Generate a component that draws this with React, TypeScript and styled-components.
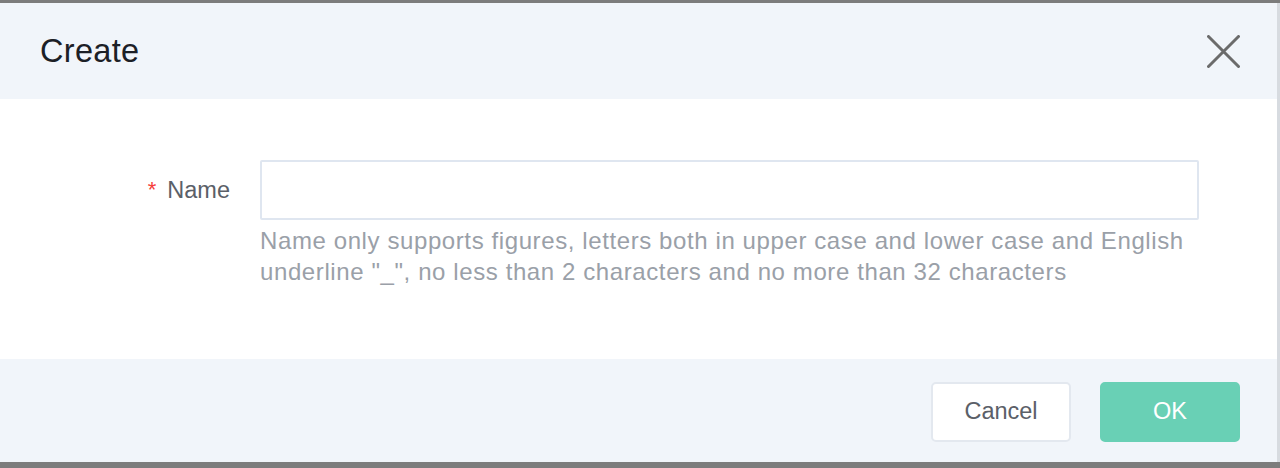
import React from "react";
import styled, { createGlobalStyle } from "styled-components";

const Global = createGlobalStyle`
  html, body { margin: 0; padding: 0; }
  body {
    background: #7c7c7c;
    font-family: "Liberation Sans", Arial, sans-serif;
    width: 1280px;
    height: 468px;
    overflow: hidden;
  }
`;

const Dialog = styled.div`
  margin-top: 3px;
  width: 1277px;
  height: 459px;
  border-right: 3px solid #d7dbe0;
  display: flex;
  flex-direction: column;
  background: #fff;
`;

const Header = styled.div`
  height: 96px;
  background: #f1f5fa;
  display: flex;
  align-items: center;
  justify-content: space-between;
  padding: 0 37px 0 40px;
  box-sizing: border-box;
`;

const Title = styled.h2`
  margin: 0;
  font-size: 32.5px;
  font-weight: 400;
  color: #1c2026;
  letter-spacing: 0.3px;
`;

const CloseButton = styled.button`
  border: none;
  background: transparent;
  padding: 0;
  width: 34px;
  height: 34px;
  display: flex;
  align-items: center;
  justify-content: center;
  cursor: pointer;
`;

const Body = styled.div`
  flex: 1;
  padding: 61px 78px 0 0;
  box-sizing: border-box;
`;

const FormRow = styled.div`
  display: grid;
  grid-template-columns: 230px 1fr;
  column-gap: 30px;
`;

const Label = styled.label`
  height: 60px;
  display: flex;
  align-items: center;
  justify-content: flex-end;
  font-size: 23.5px;
  color: #5b6068;
`;

const Required = styled.span`
  color: #f5403b;
  margin-right: 11px;
  font-size: 22px;
`;

const Field = styled.div`
  display: flex;
  flex-direction: column;
`;

const Input = styled.input`
  height: 60px;
  box-sizing: border-box;
  border: 2px solid #dfe6f0;
  border-radius: 2px;
  font-size: 22px;
  padding: 0 14px;
  outline: none;
  font-family: inherit;
`;

const Hint = styled.div`
  margin-top: 5px;
  font-size: 24px;
  line-height: 31px;
  letter-spacing: 0.6px;
  color: #9aa0a8;
`;

const Footer = styled.div`
  height: 103px;
  background: #f1f5fa;
  display: flex;
  align-items: center;
  justify-content: flex-end;
  gap: 29px;
  padding: 2px 37px 0 0;
  box-sizing: border-box;
`;

const Button = styled.button<{ $primary?: boolean }>`
  width: 140px;
  height: 60px;
  border-radius: 5px;
  font-size: 23.5px;
  font-family: inherit;
  cursor: pointer;
  border: 2px solid ${(p) => (p.$primary ? "#69d0b5" : "#e3e8ef")};
  background: ${(p) => (p.$primary ? "#69d0b5" : "#ffffff")};
  color: ${(p) => (p.$primary ? "#ffffff" : "#5b6068")};
`;

export default function App() {
  return (
    <>
      <Global />
      <Dialog>
        <Header>
          <Title>Create</Title>
          <CloseButton aria-label="close">
            <svg width="33" height="33" viewBox="0 0 33 33">
              <path d="M1.5 1.5 L31.5 31.5 M31.5 1.5 L1.5 31.5" stroke="#6b6b6b" strokeWidth="3" strokeLinecap="round" />
            </svg>
          </CloseButton>
        </Header>
        <Body>
          <FormRow>
            <Label>
              <Required>*</Required>Name
            </Label>
            <Field>
              <Input />
              <Hint>
                Name only supports figures, letters both in upper case and lower case and English underline "_", no less than 2 characters and no more than 32 characters
              </Hint>
            </Field>
          </FormRow>
        </Body>
        <Footer>
          <Button>Cancel</Button>
          <Button $primary>OK</Button>
        </Footer>
      </Dialog>
    </>
  );
}
